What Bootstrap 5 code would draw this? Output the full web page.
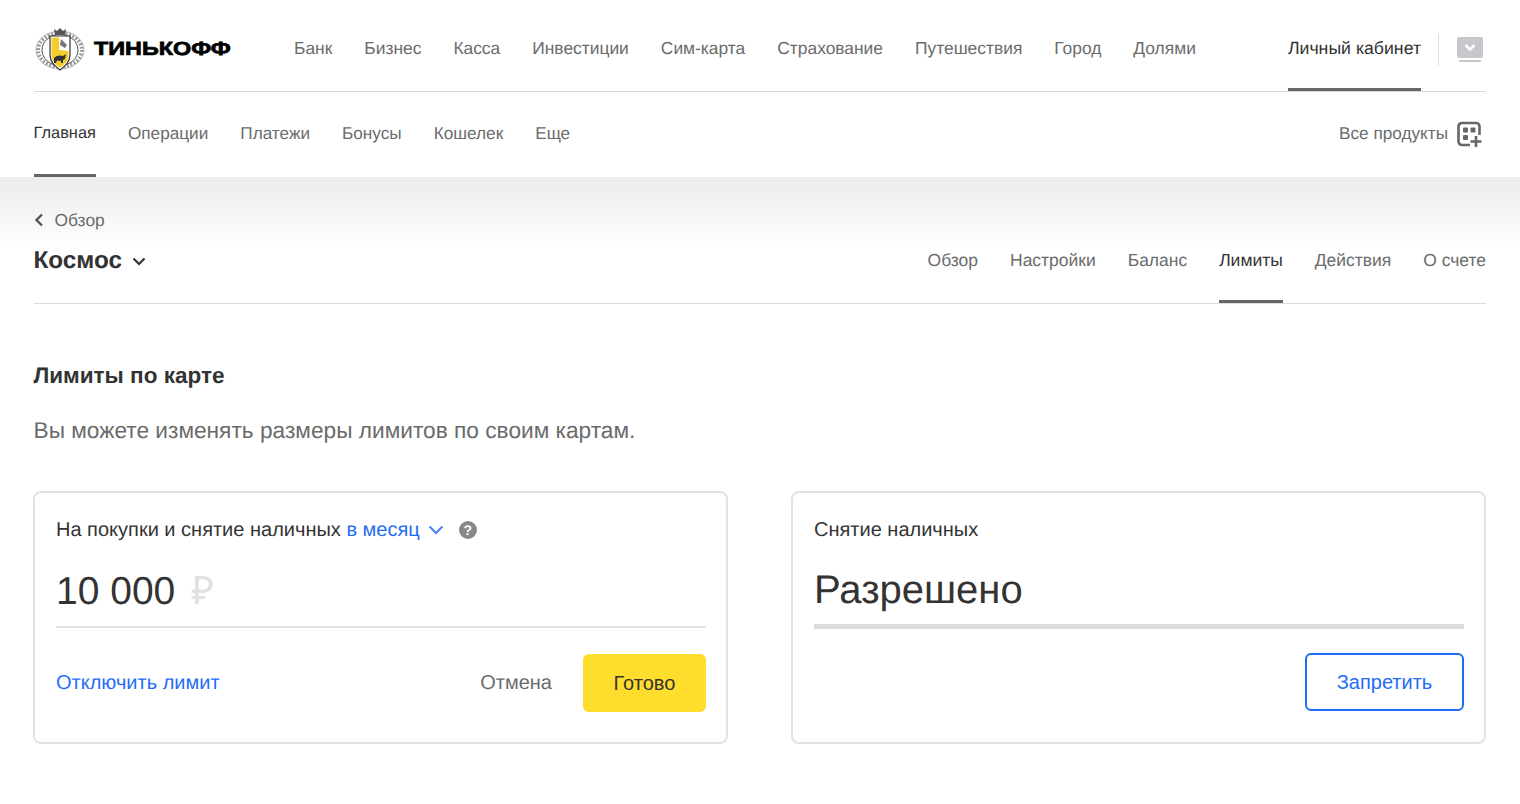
<!DOCTYPE html>
<html lang="ru">
<head>
<meta charset="UTF-8">
<title>Лимиты по карте</title>
<link href="https://cdn.jsdelivr.net/npm/bootstrap@5.3.2/dist/css/bootstrap.min.css" rel="stylesheet">
<style>
body { font-family: "Liberation Sans", Arial, sans-serif; color: #333; background: #fff; font-size: 17.4px; text-rendering: geometricPrecision; }
.tk-wrap { padding: 0 34px 0 33.5px; }
.tk-top { height: 92px; border-bottom: 1px solid #d8d8d8; }
.tk-logo { width: 260.5px; gap: 8.5px; }
.tk-logotext { font-weight: 700; font-size: 19px; line-height: 24px; color: #000; transform: scaleX(1.23); transform-origin: left center; -webkit-text-stroke: .7px #000; }
.tk-link { color: #6b6b6b; text-decoration: none; white-space: nowrap; display: flex; align-items: center; height: 100%; border-bottom: 3px solid transparent; }
.tk-link.tk-active { color: #333; border-bottom-color: #666; }
.tk-top .tk-link { padding-top: 9px; }
.tk-top .tk-link.tk-active { font-size: 17.7px; }
.tk-sep { height: 32px; margin: 8px 18px 0 17px; border-left: 1px solid #ddd; }
.tk-usericon { margin: 8px 3px 0 0; }
.tk-gap { gap: 32px; }
.tk-second { height: 85px; font-size: 17.2px; }
.tk-second .tk-link { padding-top: 1px; }
.tk-second .tk-link.tk-active { font-size: 16.4px; }
.tk-allprod { font-size: 17.2px; gap: 9px; }
.tk-banner { height: 127px; background: linear-gradient(#ececec 0, #fff 72px); }
.tk-banner-in { height: 100%; border-bottom: 1px solid #ddd; }
.tk-back { color: #6b6b6b; height: 22px; padding-top: 32px; box-sizing: content-box; gap: 11px; }
.tk-title { font-size: 24.3px; font-weight: 700; color: #333; gap: 10px; padding-bottom: 11px; }
.tk-sub { font-size: 17.48px; }
.tk-sub .tk-link { padding-bottom: 11px; }
.tk-h2 { font-size: 22.5px; font-weight: 700; margin: 58px 0 0; line-height: 28px; color: #333; }
.tk-lead { font-size: 22.7px; color: #6b6b6b; line-height: 28px; margin: 26px 0 47px; }
.tk-cols { gap: 63px; margin-left: -.5px; }
.tk-box { flex: 1 1 0; height: 253px; border: 2px solid #e3e3e3; border-radius: 8px; padding: 0 20px 0 21px; }
.tk-label { font-size: 20px; line-height: 24px; padding-top: 25px; color: #333; }
.tk-blue { color: #1f6cf5; text-decoration: none; }
.tk-amount { font-size: 39px; line-height: 44px; margin-top: 28px; height: 58px; color: #333; border-bottom: 2px solid #e3e3e3; }
.tk-rub { color: #e0e0e0; margin-left: 5px; }
.tk-word { font-size: 40px; line-height: 44px; margin-top: 26px; height: 61px; color: #333; border-bottom: 5px solid #ddd; }
.tk-foot { margin-top: 26px; font-size: 20px; }
.tk-foot-r { margin-top: 24px; }
.tk-cancel { color: #6b6b6b; text-decoration: none; margin-right: 31px; }
.tk-btn-y { background: #ffdd2d; border: 0; border-radius: 6px; width: 123px; height: 58px; color: #333; font-size: 20px; }
.tk-btn-o { border: 2px solid #1f6cf5; border-radius: 6px; background: #fff; width: 159px; height: 58px; color: #1f6cf5; font-size: 20px; }
.tk-help { width: 18px; height: 18px; margin-left: 15px; background: #888; color: #fff; font-size: 14px; font-weight: 700; }
</style>
</head>
<body>
<div class="tk-wrap">
  <div class="tk-top d-flex align-items-center">
    <div class="tk-logo d-flex align-items-center pt-2">
      <svg width="52" height="46" viewBox="0 0 52 46" fill="none">
        <!-- outer gears -->
        <ellipse cx="26" cy="23" rx="22" ry="17" stroke="#999" stroke-width="4" stroke-dasharray="2 1.600"/>
        <ellipse cx="26" cy="23" rx="18" ry="15.500" stroke="#555" stroke-width="1"/>
        <ellipse cx="26" cy="23" rx="24" ry="19" stroke="#bbb" stroke-width="1"/>
        <!-- crown -->
        <path d="M20 2l3 2 3-3 3 3 3-2-1 6H21z" fill="#555"/>
        <!-- shield -->
        <path d="M16 9h20v19c0 7-5 11-10 15-5-4-10-8-10-15z" fill="#fff" stroke="#333" stroke-width="1.200"/>
        <path d="M17.500 10.500H25V23l9.500 1v4c0 6-4 9-8.500 13-4.500-4-8.500-7-8.500-13z" fill="#f4cd2b"/>
        <path d="M27 12l6 6-2 3-5-3z" fill="#777"/>
        <path d="M20 31c3-3 6-3 9-2l3-2-1 5-2 1v3h-2v-2l-4-.500-1 2.500h-2z" fill="#333"/>
      </svg>
      <span class="tk-logotext">ТИНЬКОФФ</span>
    </div>
    <div class="d-flex tk-gap flex-grow-1 h-100">
      <a class="tk-link" href="#">Банк</a><a class="tk-link" href="#">Бизнес</a><a class="tk-link" href="#">Касса</a><a class="tk-link" href="#">Инвестиции</a><a class="tk-link" href="#">Сим-карта</a><a class="tk-link" href="#">Страхование</a><a class="tk-link" href="#">Путешествия</a><a class="tk-link" href="#">Город</a><a class="tk-link" href="#">Долями</a>
    </div>
    <a class="tk-link tk-active" href="#">Личный кабинет</a>
    <div class="tk-sep"></div>
    <svg class="tk-usericon" width="26" height="26" viewBox="0 0 26 26">
      <rect width="26" height="21" rx="2" fill="#c8c8cc"/>
      <rect x="2" y="23" width="22" height="2" fill="#c8c8cc"/>
      <path d="M8.500 8l4.500 4.500L17.500 8" fill="none" stroke="#fff" stroke-width="2.600"/>
    </svg>
  </div>

  <div class="tk-second d-flex">
    <div class="d-flex tk-gap flex-grow-1">
      <a class="tk-link tk-active" href="#">Главная</a><a class="tk-link" href="#">Операции</a><a class="tk-link" href="#">Платежи</a><a class="tk-link" href="#">Бонусы</a><a class="tk-link" href="#">Кошелек</a><a class="tk-link" href="#">Еще</a>
    </div>
    <a class="tk-link tk-allprod" href="#">Все продукты
      <svg class="me-1" width="25" height="26" viewBox="0 0 25 26" fill="none">
        <path d="M13 24H5a3.500 3.500 0 0 1-3.500-3.500v-15A3.500 3.500 0 0 1 5 2h14a3.500 3.500 0 0 1 3.500 3.500V14" stroke="#666" stroke-width="2.600"/>
        <rect x="6" y="6.500" width="5" height="5" rx="1" fill="#666"/><rect x="13.500" y="6.500" width="5" height="5" rx="1" fill="#666"/><rect x="6" y="14" width="5" height="5" rx="1" fill="#666"/>
        <path d="M19 15v11M13.500 20.500h11" stroke="#666" stroke-width="2.600"/>
      </svg>
    </a>
  </div>
</div>

<div class="tk-banner tk-wrap">
  <div class="tk-banner-in d-flex flex-column">
    <div class="tk-back d-flex align-items-center">
      <svg width="10" height="14" viewBox="0 0 10 14"><path d="M8 1.500L2.500 7 8 12.500" fill="none" stroke="#555" stroke-width="2.400"/></svg>
      <span>Обзор</span>
    </div>
    <div class="d-flex justify-content-between flex-grow-1">
      <div class="tk-title d-flex align-items-center">Космос
        <svg width="14" height="9" viewBox="0 0 14 9"><path d="M1.500 1.500L7 7l5.500-5.500" fill="none" stroke="#333" stroke-width="2.200"/></svg>
      </div>
      <div class="d-flex tk-gap tk-sub">
        <a class="tk-link" href="#">Обзор</a><a class="tk-link" href="#">Настройки</a><a class="tk-link" href="#">Баланс</a><a class="tk-link tk-active" href="#">Лимиты</a><a class="tk-link" href="#">Действия</a><a class="tk-link" href="#">О счете</a>
      </div>
    </div>
  </div>
</div>

<div class="tk-wrap">
  <h2 class="tk-h2">Лимиты по карте</h2>
  <p class="tk-lead">Вы можете изменять размеры лимитов по своим картам.</p>
  <div class="d-flex tk-cols">
    <div class="tk-box">
      <div class="tk-label d-flex align-items-center">
        <span>На покупки и снятие наличных <a class="tk-blue" href="#">в месяц</a></span>
        <svg class="ms-2" width="16" height="10" viewBox="0 0 16 10"><path d="M1.500 1.500L8 8l6.500-6.500" fill="none" stroke="#4d86f0" stroke-width="2.200"/></svg>
        <span class="tk-help d-inline-flex align-items-center justify-content-center rounded-circle">?</span>
      </div>
      <div class="tk-amount">10 000 <span class="tk-rub">₽</span></div>
      <div class="tk-foot d-flex align-items-center">
        <a class="tk-blue me-auto" href="#">Отключить лимит</a>
        <a class="tk-cancel" href="#">Отмена</a>
        <button class="btn tk-btn-y" type="button">Готово</button>
      </div>
    </div>
    <div class="tk-box">
      <div class="tk-label">Снятие наличных</div>
      <div class="tk-word">Разрешено</div>
      <div class="tk-foot tk-foot-r d-flex justify-content-end">
        <button class="btn tk-btn-o" type="button">Запретить</button>
      </div>
    </div>
  </div>
</div>
</body>
</html>
